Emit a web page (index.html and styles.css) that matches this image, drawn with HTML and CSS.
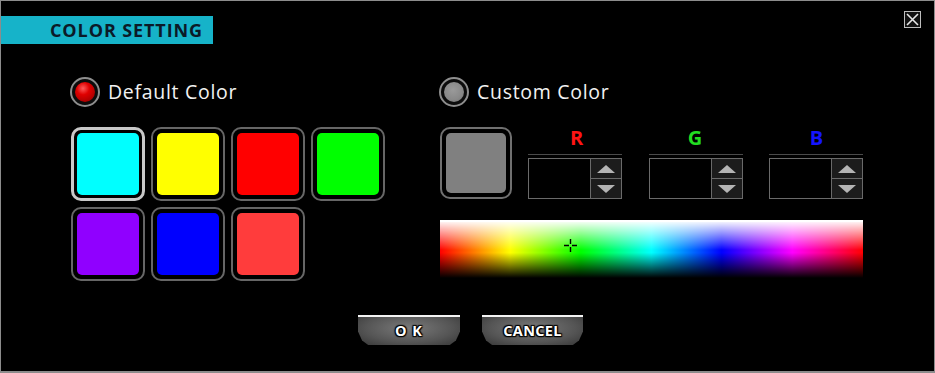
FILE: index.html
```html
<!doctype html>
<html>
<head>
<meta charset="utf-8">
<title>Color Setting</title>
<link rel="stylesheet" href="styles.css">
</head>
<body>
<div class="dialog">

	<div class="header">
		<div class="title">COLOR SETTING</div>
		<a class="close" href="#">
			<svg width="17" height="17" viewBox="0 0 17 17">
				<rect x="0.5" y="0.5" width="16" height="16" fill="#111" stroke="#bdbdbd"/>
				<path d="M3 3 L14 14 M14 3 L3 14" stroke="#e6e6e6" stroke-width="1.6"/>
			</svg>
		</a>
	</div>

	<div class="main">
		<div class="col col_left">
			<div class="radio_row">
				<span class="radio on"></span>
				<span class="radio_text">Default Color</span>
			</div>
			<div class="swatches">
				<div class="swatch selected"><span style="background:#00ffff"></span></div>
				<div class="swatch"><span style="background:#ffff00"></span></div>
				<div class="swatch"><span style="background:#ff0000"></span></div>
				<div class="swatch"><span style="background:#00ff00"></span></div>
				<div class="swatch"><span style="background:#9000ff"></span></div>
				<div class="swatch"><span style="background:#0000ff"></span></div>
				<div class="swatch"><span style="background:#ff3c3c"></span></div>
			</div>
		</div>

		<div class="col col_right">
			<div class="radio_row">
				<span class="radio"></span>
				<span class="radio_text">Custom Color</span>
			</div>
			<div class="custom_row">
				<div class="swatch custom"><span style="background:#808080"></span></div>
				<div class="channel ch_r">
					<div class="ch_label">R</div>
					<div class="spin_wrap">
						<div class="spin">
							<div class="spin_field"></div>
							<div class="spin_btns">
								<div class="spin_btn"><i class="up"></i></div>
								<div class="spin_btn"><i class="down"></i></div>
							</div>
						</div>
					</div>
				</div>
				<div class="channel ch_g">
					<div class="ch_label">G</div>
					<div class="spin_wrap">
						<div class="spin">
							<div class="spin_field"></div>
							<div class="spin_btns">
								<div class="spin_btn"><i class="up"></i></div>
								<div class="spin_btn"><i class="down"></i></div>
							</div>
						</div>
					</div>
				</div>
				<div class="channel ch_b">
					<div class="ch_label">B</div>
					<div class="spin_wrap">
						<div class="spin">
							<div class="spin_field"></div>
							<div class="spin_btns">
								<div class="spin_btn"><i class="up"></i></div>
								<div class="spin_btn"><i class="down"></i></div>
							</div>
						</div>
					</div>
				</div>
			</div>
			<div class="spectrum">
				<div class="spectrum_shade"></div>
				<svg class="cross" width="13" height="13" viewBox="0 0 13 13">
					<path d="M6.5 0 V5 M6.5 8 V13 M0 6.5 H5 M8 6.5 H13" stroke="#000" stroke-width="1.4"/>
				</svg>
			</div>
		</div>
	</div>

	<div class="buttons">
		<a class="btn btn_ok" href="#">O K</a>
		<a class="btn btn_cancel" href="#">CANCEL</a>
	</div>

</div>
</body>
</html>
```

FILE: styles.css
```css
body{ margin:0; background:#000; }
a{ text-decoration:none; }

.dialog{
	width:935px;
	height:373px;
	box-sizing:border-box;
	background:#000;
	border:1px solid #8c8c8c;
	border-bottom:2px solid #8c8c8c;
	font-family:"Open Sans","Noto Sans",sans-serif;
	color:#fff;
}

.header{
	height:44px;
	display:flex;
	justify-content:space-between;
	align-items:flex-start;
}
.title{
	margin-top:15px;
	width:212px;
	height:28px;
	box-sizing:border-box;
	padding-left:49px;
	background:#16b3c9;
	color:#0b1a28;
	font-size:18px;
	font-weight:bold;
	line-height:29px;
	letter-spacing:0.9px;
	white-space:nowrap;
}
.close{
	display:block;
	margin-top:10px;
	margin-right:13px;
	width:17px;
	height:17px;
}
.close svg{ display:block; }

.main{
	display:flex;
	padding-top:32px;
}
.col_left{
	width:438px;
	box-sizing:border-box;
	padding-left:69px;
}
.col_right{
	width:424px;
}

.radio_row{
	display:flex;
	align-items:center;
	height:30px;
}
.radio{
	width:30px;
	height:30px;
	box-sizing:border-box;
	border-radius:50%;
	border:2px solid #8e8e8e;
	background:#0c0c0c;
	display:flex;
	align-items:center;
	justify-content:center;
}
.radio::after{
	content:"";
	width:20px;
	height:20px;
	border-radius:50%;
	background:radial-gradient(circle at 45% 40%, #9a9a9a 0%, #888 60%, #707070 100%);
}
.radio.on::after{
	background:radial-gradient(circle at 40% 32%, #ff5a5a 0%, #e00000 35%, #8a0000 100%);
}
.radio_text{
	margin-left:8px;
	font-size:19.5px;
	letter-spacing:0.7px;
	color:#f2f2f2;
	line-height:30px;
}

.swatches{
	margin-top:20px;
	margin-left:1px;
	display:grid;
	grid-template-columns:repeat(4, 74px);
	grid-auto-rows:74px;
	gap:6px;
}
.swatch{
	width:74px;
	height:74px;
	box-sizing:border-box;
	border:2px solid #666;
	border-radius:10px;
	padding:4px;
	background:#000;
}
.swatch span{
	display:block;
	width:100%;
	height:100%;
	border-radius:5px;
}
.swatch.selected{
	border:3px solid #c8c8c8;
	padding:3px;
}
.swatch.custom{
	width:72px;
	height:72px;
	border-color:#707070;
}

.custom_row{
	display:flex;
	margin-top:20px;
	margin-left:1px;
	height:72px;
}
.channel{ width:94px; }
.ch_r{ margin-left:16px; }
.ch_g{ margin-left:27px; }
.ch_b{ margin-left:26px; }
.ch_label{
	height:22px;
	line-height:22px;
	text-align:center;
	font-size:20px;
	font-weight:bold;
}
.ch_r .ch_label{ color:#ff1414; padding-left:3px; }
.ch_g .ch_label{ color:#22dd22; padding-right:2px; }
.ch_b .ch_label{ color:#1414ff; padding-left:1px; }

.spin_wrap{
	margin-top:5px;
	border-top:1px solid #4a4a4a;
	padding-top:3px;
}
.spin{
	display:flex;
	height:41px;
	box-sizing:border-box;
	border:1px solid #6a6a6a;
}
.spin_field{
	width:61px;
	border-right:1px solid #6a6a6a;
	background:#000;
}
.spin_btns{
	flex:1;
	display:flex;
	flex-direction:column;
}
.spin_btn{
	flex:1;
	background:#1c1c1c;
	display:flex;
	align-items:center;
	justify-content:center;
}
.spin_btn + .spin_btn{ border-top:1px solid #6a6a6a; }
.spin_btn i{
	width:0;
	height:0;
	border-left:9px solid transparent;
	border-right:9px solid transparent;
}
.spin_btn i.up{ border-bottom:8px solid #b4b4b4; }
.spin_btn i.down{ border-top:8px solid #b4b4b4; }

.spectrum{
	position:relative;
	margin-top:21px;
	margin-left:1px;
	width:423px;
	height:58px;
	border-top:2px solid #fff;
	box-sizing:border-box;
	background:linear-gradient(to right, #ff0000 0%, #ffff00 16.6%, #00ff00 33.3%, #00ffff 50%, #0000ff 66.6%, #ff00ff 83.3%, #ff0000 100%);
}
.spectrum_shade{
	height:100%;
	background:linear-gradient(to bottom, rgba(255,255,255,0.95) 0%, rgba(255,255,255,0) 50%, rgba(0,0,0,0) 55%, rgba(0,0,0,1) 100%);
}
.cross{
	position:absolute;
	left:124px;
	top:17px;
}

.buttons{
	display:flex;
	justify-content:center;
	gap:22px;
	margin-top:34px;
	padding-left:6px;
}
.btn{
	display:block;
	width:102px;
	height:30px;
	box-sizing:border-box;
	border-top:2px solid #f4f4f4;
	clip-path:polygon(0 0, 100% 0, 100% 55%, 96% 85%, 90% 100%, 10% 100%, 4% 85%, 0 55%);
	background:radial-gradient(ellipse at 50% 40%, #7a7a7a 0%, #555 60%, #363636 100%);
	color:#fff;
	text-align:center;
	font-size:14.5px;
	font-weight:bold;
	line-height:27px;
	text-shadow:0 0 2px #000, 1px 1px 1px #000, -1px -1px 1px #000, 1px -1px 1px #000, -1px 1px 1px #000;
}
.btn_ok{ letter-spacing:1px; }
.btn_cancel{
	width:101px;
	letter-spacing:0.3px;
}
```
